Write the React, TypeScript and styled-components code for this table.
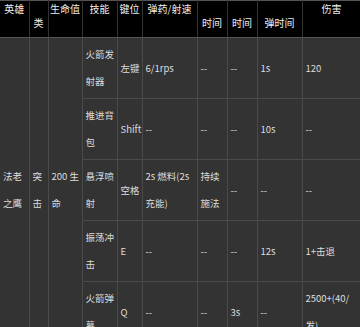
import styled, { createGlobalStyle } from 'styled-components';

const GlobalStyle = createGlobalStyle`
  html, body {
    margin: 0;
    padding: 0;
    background: #333;
    overflow: hidden;
  }
`;

type Skill = {
  name: string;
  key: string;
  ammo: string;
  cast: string;
  channel: string;
  reload: string;
  damage: string;
};

const skills: Skill[] = [
  { name: '火箭发射器', key: '左键', ammo: '6/1rps', cast: '--', channel: '--', reload: '1s', damage: '120' },
  { name: '推进背包', key: 'Shift', ammo: '--', cast: '--', channel: '--', reload: '10s', damage: '--' },
  { name: '悬浮喷射', key: '空格', ammo: '2s 燃料(2s 充能)', cast: '持续施法', channel: '--', reload: '--', damage: '--' },
  { name: '振荡冲击', key: 'E', ammo: '--', cast: '--', channel: '--', reload: '12s', damage: '1+击退' },
  { name: '火箭弹幕', key: 'Q', ammo: '--', cast: '--', channel: '3s', reload: '--', damage: '2500+(40/发)' },
];

const widths = [29, 19, 34, 35, 25, 55, 30, 30, 45, 59];

const App: React.FC = () => {
  return (
    <>
      <GlobalStyle />
      <S.Table>
        <colgroup>
          {widths.map((w, i) => <col key={i} style={{ width: w }} />)}
        </colgroup>
        <thead>
          <tr>
            <S.Th>英雄</S.Th>
            <S.Th><br />类</S.Th>
            <S.Th>生命值</S.Th>
            <S.Th>技能</S.Th>
            <S.Th>键位</S.Th>
            <S.Th>弹药/射速</S.Th>
            <S.Th><br />时间</S.Th>
            <S.Th><br />时间</S.Th>
            <S.Th><br />弹时间</S.Th>
            <S.Th>伤害</S.Th>
          </tr>
        </thead>
        <tbody>
          {skills.map((s, i) => (
            <tr key={s.name}>
              {i === 0 && (
                <>
                  <S.Td rowSpan={skills.length}>法老之鹰</S.Td>
                  <S.Td rowSpan={skills.length}>突击</S.Td>
                  <S.Td rowSpan={skills.length}>200 生命</S.Td>
                </>
              )}
              <S.Td>{s.name}</S.Td>
              <S.KeyTd>{s.key}</S.KeyTd>
              <S.Td>{s.ammo}</S.Td>
              <S.Td>{s.cast}</S.Td>
              <S.Td>{s.channel}</S.Td>
              <S.Td>{s.reload}</S.Td>
              <S.Td>{s.damage}</S.Td>
            </tr>
          ))}
        </tbody>
      </S.Table>
    </>
  );
};

const Td = styled.td`
  padding: 3px 1px 3px 3px;
  background: #333;
  color: #ddd;
  line-height: 27px;
  text-align: left;
  vertical-align: middle;
  border: 1px solid #4a4a4a;
  border-top: 0;
  border-left: 0;
  overflow: hidden;
`;

const S = {
  Table: styled.table`
    width: 361px;
    table-layout: fixed;
    border-collapse: collapse;
    border-top: 1px solid #555;
    font-family: "Noto Sans CJK SC", "Noto Sans", sans-serif;
    font-size: 9.5px;
  `,
  Th: styled.th`
    height: 37px;
    box-sizing: border-box;
    padding: 1px 1px 0;
    background: #000;
    color: #eee;
    font-size: 10px;
    font-weight: normal;
    line-height: 13.5px;
    text-align: center;
    vertical-align: top;
    border-right: 1px solid #333;
    border-bottom: 1px solid #555;
  `,
  Td,
  KeyTd: styled(Td)`
    word-break: keep-all;
    overflow: visible;
  `,
};

export default App;
